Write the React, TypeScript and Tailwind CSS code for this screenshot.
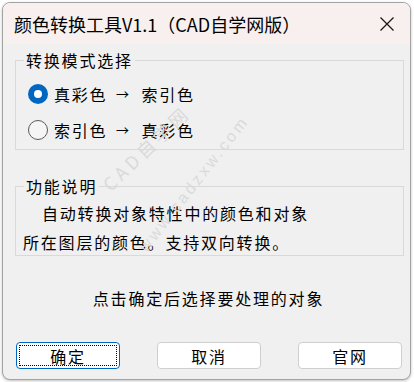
import React from "react";

const font = "font-['Noto_Sans_CJK_SC',sans-serif]";

interface RadioProps {
  checked?: boolean;
  from: string;
  to: string;
}

const Radio = ({ checked, from, to }: RadioProps) => {
  return (
    <div className="flex items-center h-[36px]">
      {checked ? (
        <span className="w-[20px] h-[20px] rounded-full bg-[#0067c0] flex items-center justify-center">
          <span className="w-[8px] h-[8px] rounded-full bg-white" />
        </span>
      ) : (
        <span className="w-[20px] h-[20px] rounded-full border border-[#5a5a5a] bg-[#f5f5f5]" />
      )}
      <span className="ml-[6px] flex items-center">
        <span>{from}</span>
        <span className="inline-block w-[34px] text-center text-[13px] tracking-normal pr-[4px]">→</span>
        <span>{to}</span>
      </span>
    </div>
  );
};

const buttons = ["确定", "取消", "官网"];

const App = () => {
  return (
    <div className={`w-[414px] h-[382px] bg-white pt-[2px] pl-[2px] ${font} text-black`}>
      <div className="relative w-[409px] h-[378px] rounded-[8px] border border-[#a3a3a3] overflow-hidden bg-[#f0f0f0] shadow-[0_1px_3px_rgba(0,0,0,0.25)]">
        {/* title bar */}
        <div className="h-[41px] bg-[#f8f0ee] flex items-center pl-[11px] pr-[15px]">
          <span className="text-[18px] leading-[24px] flex-grow">颜色转换工具V1.1（CAD自学网版）</span>
          <svg width="16" height="16" viewBox="0 0 16 16" className="mt-[1px]">
            <path d="M1.5 1.5 L14.5 14.5 M14.5 1.5 L1.5 14.5" stroke="#1a1a1a" strokeWidth="1.3" fill="none" />
          </svg>
        </div>

        <div className="text-[16px] tracking-[1.8px]">
          {/* mode group */}
          <fieldset className="mt-[6px] ml-[12px] mr-[6px] h-[100px] border border-[#d9d9d9] px-[12px]">
            <legend className="ml-[-4px] px-[2px] leading-[20px]">转换模式选择</legend>
            <div className="pt-[6px]">
              <Radio checked from="真彩色" to="索引色" />
              <Radio from="索引色" to="真彩色" />
            </div>
          </fieldset>

          {/* description group */}
          <fieldset className="mt-[26px] ml-[12px] mr-[6px] h-[80px] border border-[#d9d9d9] px-[7px]">
            <legend className="ml-[1px] px-[2px] leading-[20px]">功能说明</legend>
            <div className="pt-[3px] leading-[29px] whitespace-nowrap">
              <div className="pl-[19px]">自动转换对象特性中的颜色和对象</div>
              <div>所在图层的颜色。支持双向转换。</div>
            </div>
          </fieldset>

          <div className="mt-[30px] h-[24px] leading-[24px] text-center pl-[4px]">点击确定后选择要处理的对象</div>

          <div className="mt-[32px] ml-[13px] flex gap-[37px]">
            {buttons.map((b, i) => (
              <div
                key={"btn" + i}
                className={`relative w-[104px] h-[27px] rounded-[4px] bg-white flex items-center justify-center leading-none ${
                  i === 0 ? "border border-[#0067c0]" : "border border-[#cfcfcf]"
                }`}
              >
                {i === 0 && (
                  <span className="absolute inset-[2px] border border-dotted border-black rounded-[1px]" />
                )}
                {b}
              </div>
            ))}
          </div>
        </div>

        {/* watermark */}
        <span className="absolute left-[143px] top-[145px] -translate-x-1/2 -translate-y-1/2 rotate-[-44deg] whitespace-nowrap text-[18px] tracking-[4px] text-[#dadada] pointer-events-none">
          CAD自学网
        </span>
        <span className="absolute left-[191px] top-[181px] -translate-x-1/2 -translate-y-1/2 rotate-[-52deg] whitespace-nowrap text-[16px] tracking-[3px] text-[#dadada] font-['Liberation_Sans',sans-serif] pointer-events-none">
          www.cadzxw.com
        </span>
      </div>
    </div>
  );
};

export default App;
